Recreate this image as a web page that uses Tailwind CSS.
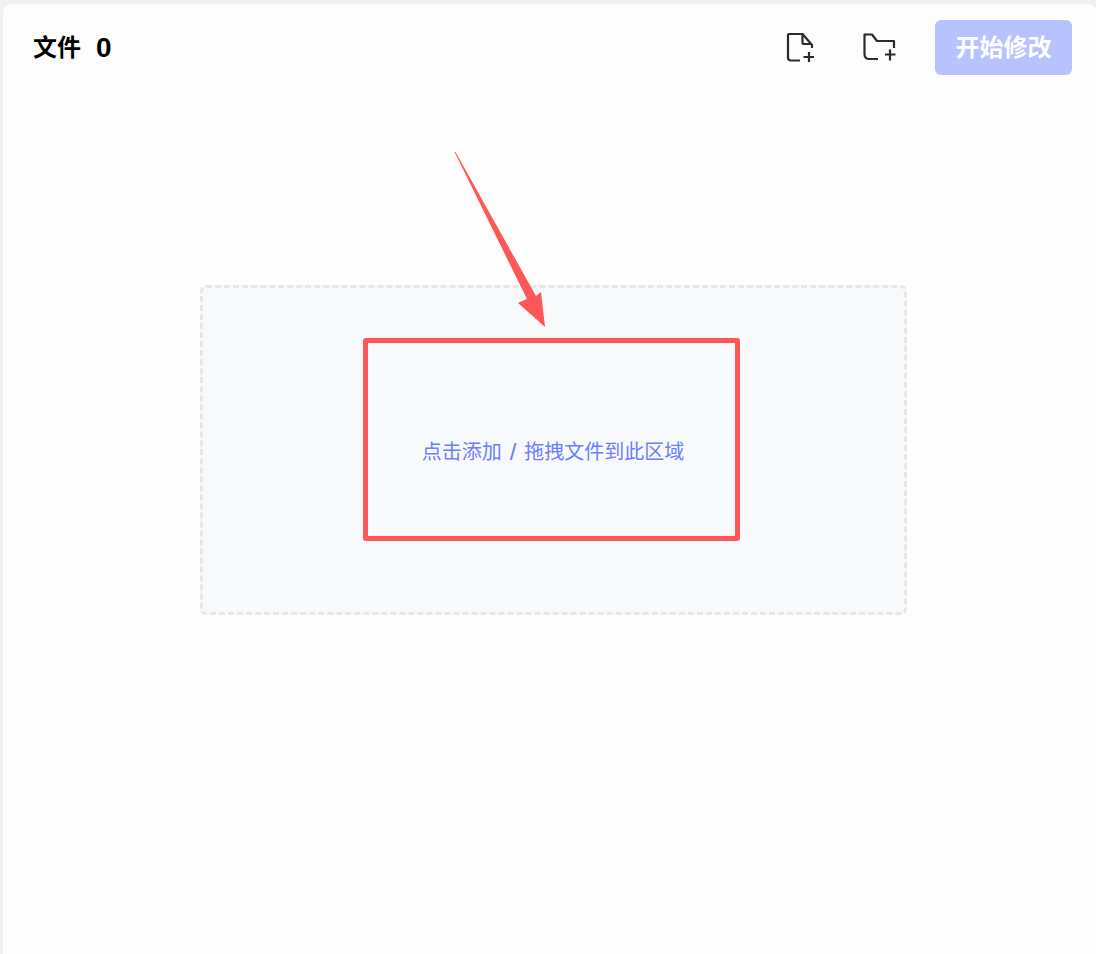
<!DOCTYPE html>
<html lang="zh-CN">
  <head>
    <meta charset="UTF-8" />
    <meta name="viewport" content="width=device-width, initial-scale=1.0" />
    <title>文件</title>
    <script src="https://cdn.jsdelivr.net/npm/@tailwindcss/browser@4"></script>
  </head>
  <body class="h-[954px] overflow-hidden bg-[#f0f1f3] pt-[4px] pl-[3px] font-['Liberation_Sans','Noto_Sans_CJK_SC',sans-serif]">
    <div class="relative h-[950px] rounded-t-lg bg-[#fdfdfd]">
      <!-- Header -->
      <header class="flex h-[71px] items-center justify-between pt-[16px] pr-[24px] pl-[30px]">
        <h1 class="flex items-center text-[24px] leading-[32px] font-bold text-black">文件<span class="ml-[15px] text-[28px]">0</span></h1>
        <div class="flex items-center">
          <button class="mr-[48px] text-[#2b2b2b]" aria-label="添加文件">
            <svg class="block" width="30" height="32" viewBox="0 0 30 32" fill="none" stroke="currentColor" stroke-width="2.200" stroke-linejoin="round">
              <path d="M15 28.500H6a3 3 0 0 1-3-3V3a1 1 0 0 1 1-1h13.500L27 13v3" />
              <path d="M17.500 2.500V11a1 1 0 0 0 1 1H27" />
              <path d="M24 20v10M18.500 25h10.500" />
            </svg>
          </button>
          <button class="mr-[39px] text-[#2b2b2b]" aria-label="添加文件夹">
            <svg class="block" width="33" height="30" viewBox="0 0 33 30" fill="none" stroke="currentColor" stroke-width="2.200" stroke-linejoin="round">
              <path d="M15 26H6a4.500 4.500 0 0 1-4.500-4.500V1.500H9L14 8h17v7" />
              <path d="M27 16.500v11M22 21.500h10.500" />
            </svg>
          </button>
          <button class="h-[55px] w-[137px] rounded-md bg-[#b7c2ff] text-[24px] font-bold text-white">开始修改</button>
        </div>
      </header>

      <!-- Drop zone -->
      <main class="mt-[210px] flex justify-center">
        <div class="ml-[7px] flex h-[330px] w-[707px] items-center justify-center rounded-md border-[3px] border-dashed border-[#e6e7e9] bg-[#f8f9fb] pt-[3px]">
          <p class="flex items-center text-[20px] leading-[30px] text-[#6b7fff]">点击添加<span class="mx-[8px] text-[24px] font-['Liberation_Sans'] leading-[30px]">/</span>拖拽文件到此区域</p>
        </div>
      </main>

      <!-- Annotation -->
      <div class="absolute top-[334px] left-[360px] h-[203px] w-[377px] rounded-[3px] border-[5px] border-[#ff5757]"></div>
      <svg class="absolute top-[0] left-[0]" width="1093" height="950" fill="#ff5757">
        <polygon points="451.500,148 452.500,148 533,292 538,288 542,323 515,299 524,295" />
      </svg>
    </div>
  </body>
</html>
